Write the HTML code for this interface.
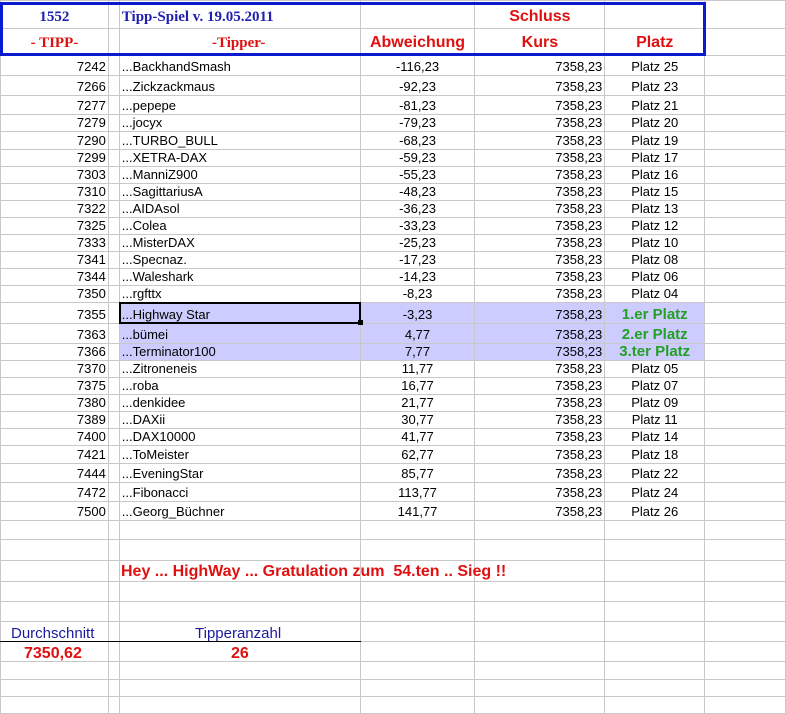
<!DOCTYPE html>
<html><head><meta charset="utf-8"><style>
body{margin:0;width:786px;height:714px;overflow:hidden;background:#fff;position:relative;font-family:"Liberation Sans",Arial,sans-serif;}
table{border-collapse:collapse;table-layout:fixed;position:absolute;left:0;top:0;}
td{border:1px solid #c8c8c8;padding:0 2px;font-size:13px;color:#000;white-space:nowrap;overflow:hidden;line-height:1;vertical-align:bottom;padding-bottom:2px;}
td.a{text-align:right;}
td.c{text-align:left;padding-left:2px;}
td.d{text-align:center;}
td.e{text-align:right;}
td.f{text-align:center;}
tr.h td{background:#ccccff;}
tr.h td.a,tr.h td.b{background:#fff;}
td.g{font-weight:bold;color:#22a022;font-size:15px;padding-bottom:1px;}
.hs{font-family:"Liberation Serif",serif;font-weight:bold;font-size:15px;}
.hr{color:#e01010;font-weight:bold;font-size:16px;}
.abs{position:absolute;white-space:nowrap;}
</style></head><body>
<table>
<colgroup><col style="width:108px"><col style="width:11px"><col style="width:241px"><col style="width:115px"><col style="width:130px"><col style="width:100px"><col style="width:81px"></colgroup>
<tr style="height:28px"><td class="hs" style="text-align:center;color:#2020b0;padding-bottom:3px">1552</td><td></td><td class="hs" style="color:#2020b0;padding-bottom:3px">Tipp-Spiel v. 19.05.2011</td><td></td><td class="hr" style="text-align:center;padding-bottom:3px">Schluss</td><td></td><td></td></tr>
<tr style="height:27px"><td class="hs" style="text-align:center;color:#e01010;padding-bottom:4px">- TIPP-</td><td></td><td class="hs" style="text-align:center;color:#e01010;padding-left:0;padding-bottom:4px">-Tipper-</td><td class="hr" style="text-align:center;padding-bottom:4px">Abweichung</td><td class="hr" style="text-align:center;padding-bottom:4px">Kurs</td><td class="hr" style="text-align:center;padding-bottom:4px">Platz</td><td></td></tr>
<tr style="height:20px"><td class="a">7242</td><td></td><td class="c">...BackhandSmash</td><td class="d">-116,23</td><td class="e">7358,23</td><td class="f">Platz 25</td><td></td></tr>
<tr style="height:20px"><td class="a">7266</td><td></td><td class="c">...Zickzackmaus</td><td class="d">-92,23</td><td class="e">7358,23</td><td class="f">Platz 23</td><td></td></tr>
<tr style="height:19px"><td class="a">7277</td><td></td><td class="c">...pepepe</td><td class="d">-81,23</td><td class="e">7358,23</td><td class="f">Platz 21</td><td></td></tr>
<tr style="height:17px"><td class="a">7279</td><td></td><td class="c">...jocyx</td><td class="d">-79,23</td><td class="e">7358,23</td><td class="f">Platz 20</td><td></td></tr>
<tr style="height:18px"><td class="a">7290</td><td></td><td class="c">...TURBO_BULL</td><td class="d">-68,23</td><td class="e">7358,23</td><td class="f">Platz 19</td><td></td></tr>
<tr style="height:17px"><td class="a">7299</td><td></td><td class="c">...XETRA-DAX</td><td class="d">-59,23</td><td class="e">7358,23</td><td class="f">Platz 17</td><td></td></tr>
<tr style="height:17px"><td class="a">7303</td><td></td><td class="c">...ManniZ900</td><td class="d">-55,23</td><td class="e">7358,23</td><td class="f">Platz 16</td><td></td></tr>
<tr style="height:17px"><td class="a">7310</td><td></td><td class="c">...SagittariusA</td><td class="d">-48,23</td><td class="e">7358,23</td><td class="f">Platz 15</td><td></td></tr>
<tr style="height:17px"><td class="a">7322</td><td></td><td class="c">...AIDAsol</td><td class="d">-36,23</td><td class="e">7358,23</td><td class="f">Platz 13</td><td></td></tr>
<tr style="height:17px"><td class="a">7325</td><td></td><td class="c">...Colea</td><td class="d">-33,23</td><td class="e">7358,23</td><td class="f">Platz 12</td><td></td></tr>
<tr style="height:17px"><td class="a">7333</td><td></td><td class="c">...MisterDAX</td><td class="d">-25,23</td><td class="e">7358,23</td><td class="f">Platz 10</td><td></td></tr>
<tr style="height:17px"><td class="a">7341</td><td></td><td class="c">...Specnaz.</td><td class="d">-17,23</td><td class="e">7358,23</td><td class="f">Platz 08</td><td></td></tr>
<tr style="height:17px"><td class="a">7344</td><td></td><td class="c">...Waleshark</td><td class="d">-14,23</td><td class="e">7358,23</td><td class="f">Platz 06</td><td></td></tr>
<tr style="height:17px"><td class="a">7350</td><td></td><td class="c">...rgfttx</td><td class="d">-8,23</td><td class="e">7358,23</td><td class="f">Platz 04</td><td></td></tr>
<tr class="h" style="height:21px"><td class="a">7355</td><td class="b"></td><td class="c">...Highway Star</td><td class="d">-3,23</td><td class="e">7358,23</td><td class="f g">1.er Platz</td><td style="background:#fff"></td></tr>
<tr class="h" style="height:20px"><td class="a">7363</td><td class="b"></td><td class="c">...bümei</td><td class="d">4,77</td><td class="e">7358,23</td><td class="f g">2.er Platz</td><td style="background:#fff"></td></tr>
<tr class="h" style="height:17px"><td class="a">7366</td><td class="b"></td><td class="c">...Terminator100</td><td class="d">7,77</td><td class="e">7358,23</td><td class="f g">3.ter Platz</td><td style="background:#fff"></td></tr>
<tr style="height:17px"><td class="a">7370</td><td></td><td class="c">...Zitroneneis</td><td class="d">11,77</td><td class="e">7358,23</td><td class="f">Platz 05</td><td></td></tr>
<tr style="height:17px"><td class="a">7375</td><td></td><td class="c">...roba</td><td class="d">16,77</td><td class="e">7358,23</td><td class="f">Platz 07</td><td></td></tr>
<tr style="height:17px"><td class="a">7380</td><td></td><td class="c">...denkidee</td><td class="d">21,77</td><td class="e">7358,23</td><td class="f">Platz 09</td><td></td></tr>
<tr style="height:17px"><td class="a">7389</td><td></td><td class="c">...DAXii</td><td class="d">30,77</td><td class="e">7358,23</td><td class="f">Platz 11</td><td></td></tr>
<tr style="height:17px"><td class="a">7400</td><td></td><td class="c">...DAX10000</td><td class="d">41,77</td><td class="e">7358,23</td><td class="f">Platz 14</td><td></td></tr>
<tr style="height:18px"><td class="a">7421</td><td></td><td class="c">...ToMeister</td><td class="d">62,77</td><td class="e">7358,23</td><td class="f">Platz 18</td><td></td></tr>
<tr style="height:19px"><td class="a">7444</td><td></td><td class="c">...EveningStar</td><td class="d">85,77</td><td class="e">7358,23</td><td class="f">Platz 22</td><td></td></tr>
<tr style="height:19px"><td class="a">7472</td><td></td><td class="c">...Fibonacci</td><td class="d">113,77</td><td class="e">7358,23</td><td class="f">Platz 24</td><td></td></tr>
<tr style="height:19px"><td class="a">7500</td><td></td><td class="c">...Georg_Büchner</td><td class="d">141,77</td><td class="e">7358,23</td><td class="f">Platz 26</td><td></td></tr>
<tr style="height:19px"><td></td><td></td><td></td><td></td><td></td><td></td><td></td></tr>
<tr style="height:21px"><td></td><td></td><td></td><td></td><td></td><td></td><td></td></tr>
<tr style="height:21px"><td></td><td></td><td></td><td></td><td></td><td></td><td></td></tr>
<tr style="height:20px"><td></td><td></td><td></td><td></td><td></td><td></td><td></td></tr>
<tr style="height:20px"><td></td><td></td><td></td><td></td><td></td><td></td><td></td></tr>
<tr style="height:20px"><td style="border-bottom:1px solid #000"></td><td style="border-bottom:1px solid #000"></td><td style="border-bottom:1px solid #000"></td><td></td><td></td><td></td><td></td></tr>
<tr style="height:20px"><td></td><td></td><td></td><td></td><td></td><td></td><td></td></tr>
<tr style="height:18px"><td></td><td></td><td></td><td></td><td></td><td></td><td></td></tr>
<tr style="height:17px"><td></td><td></td><td></td><td></td><td></td><td></td><td></td></tr>
<tr style="height:17px"><td></td><td></td><td></td><td></td><td></td><td></td><td></td></tr>
</table>
<div class="abs" style="left:0;top:2px;width:700px;height:48px;border:3px solid #0a1ad0;"></div>
<div class="abs" style="left:119px;top:302px;width:238px;height:18px;border:2px solid #000;"></div>
<div class="abs" style="left:358px;top:320px;width:5px;height:5px;background:#000;"></div>
<div class="abs" style="left:121px;top:563px;font-size:16px;font-weight:bold;color:#e01010;">Hey ... HighWay ... Gratulation zum&nbsp; 54.ten .. Sieg !!</div>
<div class="abs" style="left:11px;top:625px;font-size:15px;color:#1a1aa0;">Durchschnitt</div>
<div class="abs" style="left:195px;top:625px;font-size:15px;color:#1a1aa0;">Tipperanzahl</div>
<div class="abs" style="left:24px;top:645px;font-size:16px;font-weight:bold;color:#e01010;">7350,62</div>
<div class="abs" style="left:231px;top:645px;font-size:16px;font-weight:bold;color:#e01010;">26</div>
</body></html>
